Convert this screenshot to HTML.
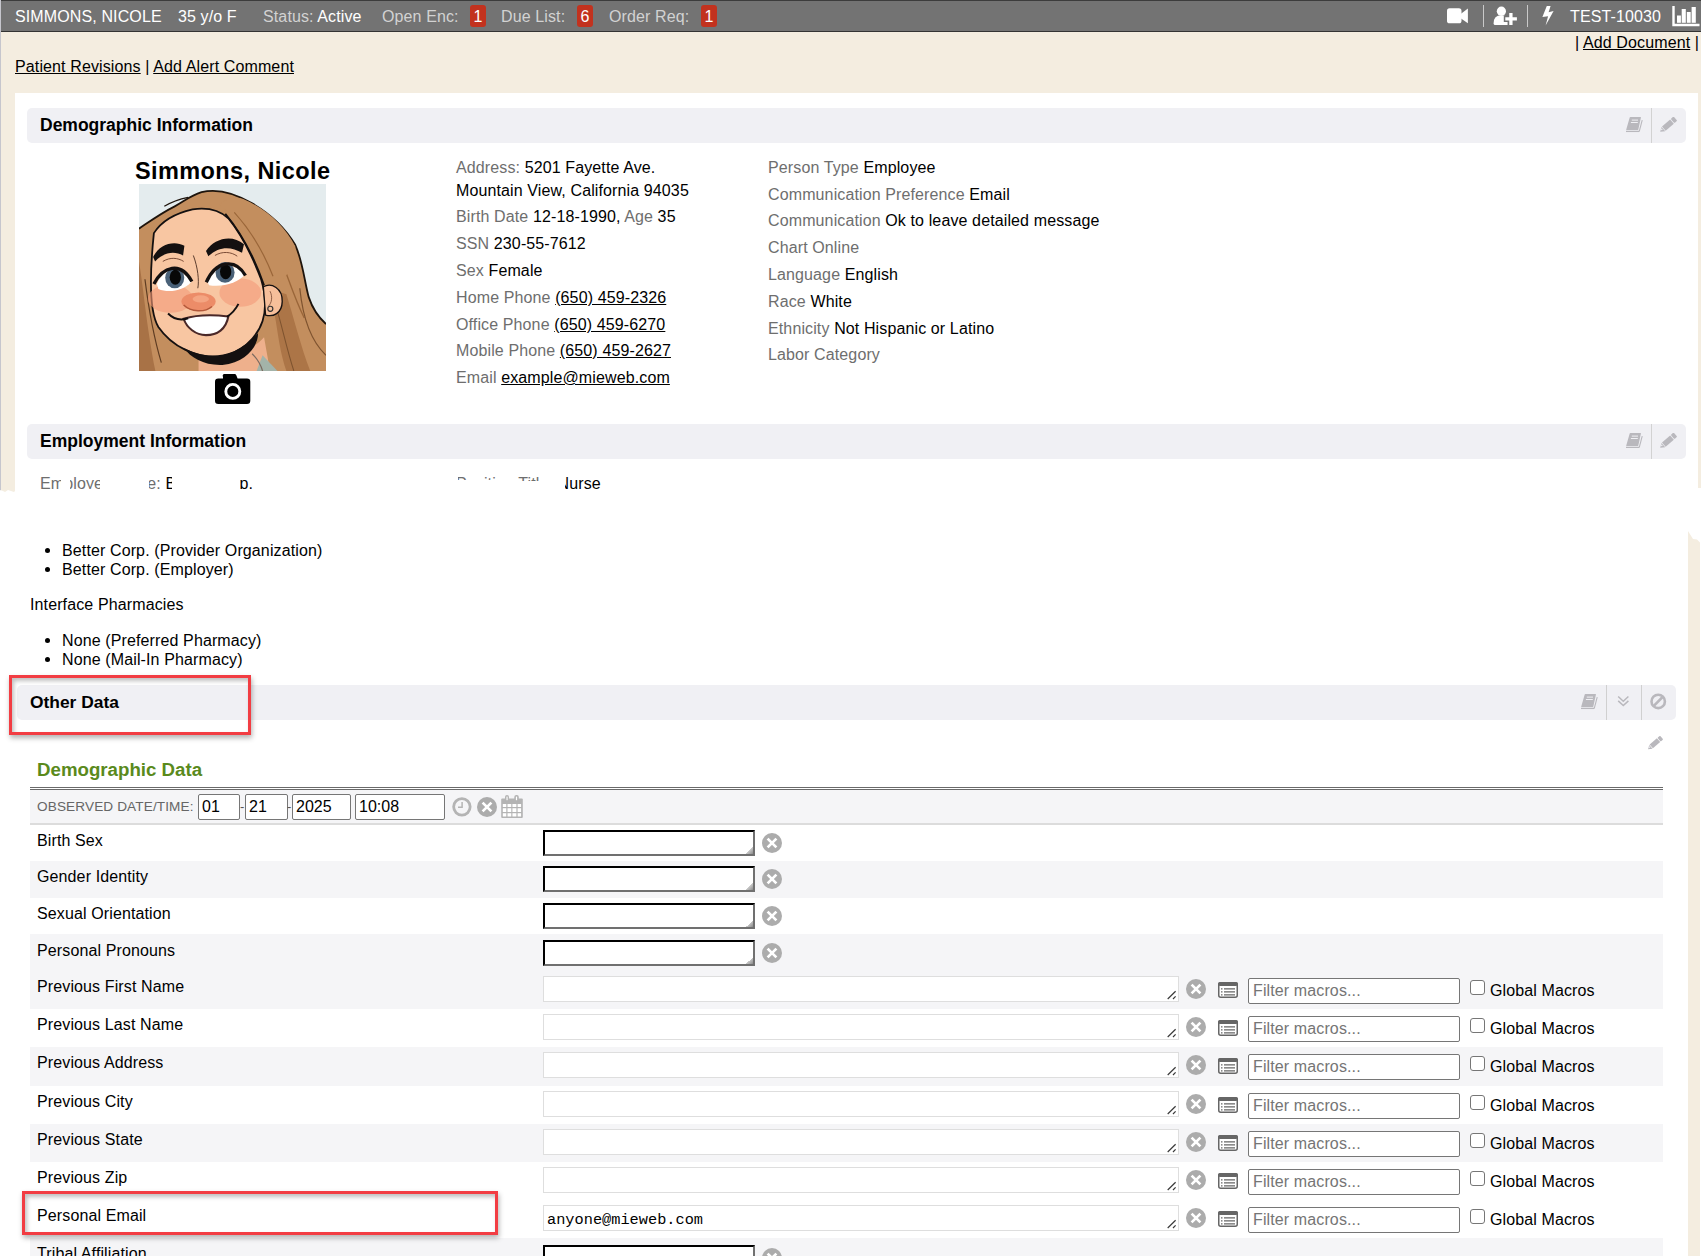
<!DOCTYPE html>
<html><head><meta charset="utf-8">
<style>
*{box-sizing:border-box}
html,body{margin:0;padding:0}
body{width:1701px;height:1256px;position:relative;overflow:hidden;background:#fff;font-family:"Liberation Sans",sans-serif;color:#000}
.a{position:absolute;white-space:pre;line-height:1}
.t16{font-size:16px;letter-spacing:.12px}
.lbl{color:#6e6e6e}
.u{text-decoration:underline;text-underline-offset:1px}
#top{position:absolute;left:0;top:0;width:1701px;height:492px;clip-path:polygon(0 0,1701px 0,1701px 488px,1698px 488px,1698px 489px,15px 489px,15px 491px,14px 492px,11px 491px,8px 490px,5px 492px,3px 491px,0 490px);background:#f4ede0;overflow:hidden}
#bar{position:absolute;left:0;top:0;width:1701px;height:32px;background:#737373;border-top:1px solid #3c3c3c;border-bottom:1px solid #333}
.w{color:#fff}
.lg{color:#d2d2d2}
.badge{position:absolute;top:5px;width:16px;height:22px;background:#c2321e;border-radius:3px;color:#fff;font-size:16px;line-height:24px;text-align:center}
.hdr{position:absolute;background:#f0f0f4;border-radius:5px}
.hdrt{font-weight:bold}
.ico{position:absolute}
#bottom{position:absolute;left:0;top:0;width:1701px;height:1256px}
.row{position:absolute;left:30px;width:1633px}
.g{background:#f5f5f7}
.sel{position:absolute;left:543px;width:212px;height:26px;background:#fff;border:2px solid;border-color:#000 #707070 #707070 #000}
.ta{position:absolute;left:543px;width:636px;height:26px;background:#fff;border:1px solid #dedede}
.flt{position:absolute;left:1248px;width:212px;height:26px;background:#fff;border:1px solid #767676;border-radius:2px;color:#757575;font-size:16px;line-height:24px;padding-left:4px;letter-spacing:.12px;white-space:pre}
.cb{position:absolute;left:1470px;width:15px;height:15px;border:1.3px solid #767676;border-radius:3px;background:#fff}
.gm{position:absolute;left:1490px;font-size:16px;line-height:1;letter-spacing:.12px;white-space:pre}
.lab{position:absolute;left:37px;font-size:16px;line-height:1;white-space:pre;letter-spacing:.12px}

.clr{position:absolute;width:20px;height:20px}
.mac{position:absolute;width:20px;height:16px}
.grip{position:absolute;right:0;bottom:0;width:7px;height:7px;background:linear-gradient(135deg,transparent 50%,#c8c8c8 50%,#8a8a8a)}
.rsz{position:absolute;right:1px;bottom:1px;width:11px;height:11px}
.mono{font-family:"Liberation Mono",monospace;font-size:15.3px;position:absolute;left:3px;top:7px;line-height:1;white-space:pre}
.bul{position:absolute;width:5px;height:5px;border-radius:50%;background:#000}
.redbox{position:absolute;border:3px solid #f23d43;box-shadow:1px 3px 5px rgba(0,0,0,.3), inset 2px 3px 4px rgba(0,0,0,.25)}
.dtin{position:absolute;top:794px;height:26px;background:#fff;border:1px solid #767676;border-radius:2px;font-size:16px;line-height:24px;padding-left:3px}
</style></head>
<body>
<svg width="0" height="0" style="position:absolute">
<symbol id="ix" viewBox="0 0 20 20"><circle cx="10" cy="10" r="10" fill="#acacac"/><path d="M5.6 5.6L14.4 14.4M14.4 5.6L5.6 14.4" stroke="#fff" stroke-width="2.7" stroke-linecap="butt"/></symbol>
<symbol id="imac" viewBox="0 0 20 16"><rect x="0.75" y="0.75" width="18.5" height="14.5" rx="2" fill="#fff" stroke="#666" stroke-width="1.5"/><rect x="0" y="0" width="20" height="4" rx="2" fill="#666"/><path d="M3 6.8h1.5M3 9.8h1.5M3 12.8h1.5M6 6.8h11M6 9.8h11M6 12.8h11" stroke="#666" stroke-width="1.3"/></symbol>
<symbol id="ibook" viewBox="0 0 24 24"><path d="M10.4 7h10.1q.6 0 .45.6L18.3 19.4q-.15.6-.7.6H6.7q-.6 0-.45-.6L9.7 7.6q.15-.6.7-.6z" fill="#b9b8bd"/><rect x="11.8" y="9.6" width="6.2" height="1" fill="#f0f0f4"/><rect x="10.9" y="12" width="6.9" height="1" fill="#f0f0f4"/><path d="M6 21.4h13" stroke="#b9b8bd" stroke-width="1.3"/><path d="M22.2 10.2L19.2 21.6" stroke="#b9b8bd" stroke-width="1.1"/></symbol>
<symbol id="ipen" viewBox="0 0 18 16"><g transform="translate(1.2 14.8) rotate(-41)"><path d="M0 0L4.2 -2.8V2.8Z" fill="#b9b8bd"/><path d="M1.2 -.9L3.3 -2V.4Z" fill="#f0f0f4" opacity=".9"/><rect x="4.8" y="-2.8" width="10.8" height="5.6" fill="#b9b8bd"/><rect x="16.4" y="-2.8" width="3.8" height="5.6" rx="1" fill="#b9b8bd"/></g></symbol>
<symbol id="irs" viewBox="0 0 11 11"><path d="M1.7 10L9.6 2.3M7 10L9.6 7.4" stroke="#3a3a3a" stroke-width="1.2"/></symbol>
</svg>
<div id="top">
  <div id="bar">
    <div class="a t16 w" style="left:15px;top:8px">SIMMONS, NICOLE</div>
    <div class="a t16 w" style="left:178px;top:8px">35 y/o F</div>
    <div class="a t16" style="left:263px;top:8px"><span class="lg">Status: </span><span class="w">Active</span></div>
    <div class="a t16 lg" style="left:382px;top:8px">Open Enc:</div>
    <div class="badge" style="left:470px;top:4px">1</div>
    <div class="a t16 lg" style="left:501px;top:8px">Due List:</div>
    <div class="badge" style="left:577px;top:4px">6</div>
    <div class="a t16 lg" style="left:609px;top:8px">Order Req:</div>
    <div class="badge" style="left:701px;top:4px">1</div>
    <div class="a t16 w" style="left:1570px;top:8px">TEST-10030</div>
    <svg class="ico" style="left:1446px;top:6px" width="24" height="17" viewBox="0 0 24 17"><rect x="1" y="1.3" width="14.5" height="15" rx="2.6" fill="#fff"/><path d="M15 6.8L21.9 1.6V16.2L15 11.4Z" fill="#fff"/></svg>
    <div style="position:absolute;left:1483px;top:4px;width:1px;height:22px;background:#c9c9c9"></div>
    <svg class="ico" style="left:1492px;top:5px" width="28" height="26" viewBox="0 0 28 26"><circle cx="9.4" cy="5.2" r="4.6" fill="#fff"/><path d="M1.6 17.4Q1.6 9.3 9.3 9.3Q13.6 9.3 15.6 12V18.9H3.1Q1.6 18.9 1.6 17.4Z" fill="#fff"/><path d="M18.9 5.5v15M11.8 12.9h14.6" stroke="#737373" stroke-width="6"/><path d="M18.9 7v11.9M13.3 12.9h11.6" stroke="#fff" stroke-width="3.3"/></svg>
    <div style="position:absolute;left:1527px;top:4px;width:1px;height:22px;background:#c9c9c9"></div>
    <svg class="ico" style="left:1540px;top:4px" width="16" height="23" viewBox="0 0 16 23"><path d="M6.8 1H10.6L8.6 7.2L13.6 6.1L5.6 20.6L8.1 11.2L2.4 11.9Z" fill="#fff"/></svg>
    <svg class="ico" style="left:1670px;top:4px" width="31" height="24" viewBox="0 0 31 24"><path d="M3.5 0.9V20H29.5" fill="none" stroke="#fff" stroke-width="2.4"/><rect x="7" y="10.5" width="3.9" height="7.3" fill="#fff"/><rect x="11.7" y="4" width="4.1" height="13.8" fill="#fff"/><rect x="16.8" y="7" width="3.9" height="10.8" fill="#fff"/><rect x="21.6" y="2" width="4.2" height="15.8" fill="#fff"/></svg>

  </div>
  <div class="a t16" style="left:15px;top:59px"><span class="u">Patient Revisions</span> | <span class="u">Add Alert Comment</span></div>
  <div class="a t16" style="left:1575px;top:35px">| <span class="u">Add Document</span> |</div>
  
  <div id="panel" style="position:absolute;left:15px;top:93px;width:1683px;height:420px;background:#fff">
  </div>
  <div class="hdr" style="left:27px;top:108px;width:1659px;height:35px"></div>
  <div class="a hdrt" style="left:40px;top:117px;font-size:17.5px">Demographic Information</div>
  <div class="hdr" style="left:27px;top:424px;width:1659px;height:35px"></div>
  <div class="a hdrt" style="left:40px;top:433px;font-size:17.5px">Employment Information</div>

  <div class="a hdrt" style="left:135px;top:160px;font-size:23.5px;letter-spacing:.4px">Simmons, Nicole</div>
  <svg id="face" style="position:absolute;left:139px;top:184px" width="187" height="187" viewBox="0 0 1256 1256">
<rect width="1256" height="1256" fill="#e4ecee"/>
<path d="M0 300 C60 260 140 200 240 150 C300 120 340 80 420 55 C520 30 640 60 760 130 C880 200 980 290 1050 410 C1100 520 1110 650 1140 760 C1170 850 1210 900 1256 940 L1256 1256 L0 1256 Z" fill="#c38e5e"/>
<path d="M0 300 C60 260 140 200 240 150 C300 120 340 80 420 55 C520 30 640 60 760 130 C880 200 980 290 1050 410 C1100 520 1110 650 1140 760 C1170 850 1210 900 1256 940" fill="none" stroke="#1e140c" stroke-width="12"/>
<path d="M170 150 C220 120 280 100 330 90" fill="none" stroke="#1e140c" stroke-width="8"/>
<path d="M0 520 C30 700 50 950 110 1256 L0 1256Z" fill="#a87246"/>
<path d="M860 700 C930 850 920 1050 990 1256 L1150 1256 C1090 1100 1040 900 990 740Z" fill="#ac7547"/>
<path d="M640 130 C760 220 880 340 950 500 C1000 620 1040 760 1110 900" fill="none" stroke="#9a6639" stroke-width="9"/>
<path d="M720 150 C830 240 930 350 990 480" fill="none" stroke="#7e532f" stroke-width="7"/>
<path d="M1080 700 C1100 900 1150 1050 1256 1150" fill="none" stroke="#7e532f" stroke-width="8"/>
<path d="M40 640 C60 800 90 1000 150 1200" fill="none" stroke="#5e3c22" stroke-width="8"/>
<path d="M920 820 C960 950 990 1100 1040 1256" fill="none" stroke="#7e532f" stroke-width="7"/>
<path d="M400 1120 C500 1190 700 1180 840 1030 L880 1256 L400 1256 Z" fill="#eeb08c"/>
<path d="M830 1150 L930 1256 L790 1256Z" fill="#a3b3a9"/>
<path d="M760 1140 C800 1180 820 1220 830 1256" fill="none" stroke="#7a6a60" stroke-width="8"/>
<path d="M100 330 C150 250 250 195 360 170 C460 155 540 175 600 230 C680 330 760 480 820 640 C850 740 855 840 830 920 C790 1040 680 1140 540 1160 C380 1170 220 1090 130 960 C70 860 70 620 100 330Z" fill="#f8c6a2" stroke="#141010" stroke-width="12"/>
<path d="M540 140 C640 220 740 370 810 560 C830 620 845 670 860 700 C960 690 1050 560 1050 420 C980 280 860 170 700 100 C640 80 580 100 540 140Z" fill="#c38e5e"/>
<path d="M580 200 C680 320 770 480 840 680" fill="none" stroke="#141010" stroke-width="12"/>
<path d="M640 190 C740 300 830 440 900 620" fill="none" stroke="#9a6639" stroke-width="8"/>
<path d="M300 1100 C440 1180 640 1185 800 1000 C800 1090 720 1200 560 1215 C440 1220 350 1170 300 1100Z" fill="#141010"/>
<path d="M835 690 C890 660 965 700 962 790 C960 870 900 895 850 880Z" fill="#f6bf9a" stroke="#141010" stroke-width="9"/>
<path d="M880 720 C900 760 890 800 870 820" fill="none" stroke="#6b3d2a" stroke-width="5"/>
<circle cx="882" cy="838" r="17" fill="none" stroke="#333" stroke-width="8"/>
<ellipse cx="210" cy="770" rx="150" ry="95" fill="#f39a78" opacity=".6"/>
<ellipse cx="680" cy="730" rx="140" ry="95" fill="#f39a78" opacity=".6"/>
<ellipse cx="400" cy="790" rx="115" ry="62" fill="#ec8c68"/>
<ellipse cx="415" cy="772" rx="55" ry="24" fill="#f4a582"/>
<path d="M300 812 C350 860 440 865 490 822" fill="none" stroke="#b2583a" stroke-width="9"/>
<path d="M365 480 C395 560 405 650 395 700" fill="none" stroke="#4a2d20" stroke-width="6"/>
<path d="M95 490 C135 405 235 375 305 415 L296 480 C240 450 170 455 108 520Z" fill="#141010"/>
<path d="M450 450 C505 365 625 335 705 405 L692 462 C620 420 540 415 466 485Z" fill="#141010"/>
<path d="M160 520 C210 490 260 495 300 520" fill="none" stroke="#6b3d2a" stroke-width="6"/>
<path d="M510 480 C560 450 620 455 660 485" fill="none" stroke="#6b3d2a" stroke-width="6"/>
<path d="M120 670 C165 565 275 540 350 660 C300 715 200 735 130 705Z" fill="#fff"/>
<ellipse cx="240" cy="630" rx="64" ry="70" fill="#4a6178"/>
<ellipse cx="244" cy="626" rx="38" ry="50" fill="#080808"/>
<path d="M100 672 C160 555 280 515 355 655" fill="none" stroke="#141010" stroke-width="22"/>
<path d="M460 655 C510 545 630 520 712 605 C670 665 560 695 470 680Z" fill="#fff"/>
<ellipse cx="578" cy="594" rx="64" ry="70" fill="#4a6178"/>
<ellipse cx="582" cy="590" rx="38" ry="50" fill="#080808"/>
<path d="M452 660 C512 520 645 490 715 615" fill="none" stroke="#141010" stroke-width="22"/>
<path d="M300 905 C400 875 520 880 600 890 C585 975 525 1015 450 1015 C380 1015 320 965 300 905Z" fill="#fff" stroke="#4a2828" stroke-width="14"/>
<path d="M195 870 C240 915 290 915 330 902" fill="none" stroke="#141010" stroke-width="13"/>
<path d="M590 892 C625 870 650 840 668 805" fill="none" stroke="#141010" stroke-width="13"/>
</svg>



  <svg class="ico" style="left:1620px;top:110px" width="24" height="24"><use href="#ibook"/></svg>
  <div style="position:absolute;left:1651px;top:108px;width:1px;height:35px;background:#d2d2d2"></div>
  <svg class="ico" style="left:1659px;top:117px" width="18" height="16"><use href="#ipen"/></svg>
  <svg class="ico" style="left:1620px;top:426px" width="24" height="24"><use href="#ibook"/></svg>
  <div style="position:absolute;left:1651px;top:424px;width:1px;height:35px;background:#d2d2d2"></div>
  <svg class="ico" style="left:1659px;top:433px" width="18" height="16"><use href="#ipen"/></svg>
  <svg class="ico" style="left:215px;top:374px" width="36" height="31" viewBox="0 0 36 31"><path d="M9.4 0h10.2q1.2 0 1.7 1.2L22.6 4.4H32q3.3 0 3.3 3.3v19.1q0 3.3-3.3 3.3H3.3Q0 30.1 0 26.8V7.7q0-3.3 3.3-3.3h4.8L7.7 1.2Q8.2 0 9.4 0z" transform="translate(0 0)" fill="#000"/><circle cx="17.8" cy="17.4" r="7" fill="none" stroke="#fff" stroke-width="2.9"/></svg>
  <!-- address column -->
  <div class="a t16" style="left:456px;top:160px"><span class="lbl">Address: </span>5201 Fayette Ave.</div>
  <div class="a t16" style="left:456px;top:183px">Mountain View, California 94035</div>
  <div class="a t16" style="left:456px;top:209px"><span class="lbl">Birth Date </span>12-18-1990, <span class="lbl">Age </span>35</div>
  <div class="a t16" style="left:456px;top:236px"><span class="lbl">SSN </span>230-55-7612</div>
  <div class="a t16" style="left:456px;top:263px"><span class="lbl">Sex </span>Female</div>
  <div class="a t16" style="left:456px;top:290px"><span class="lbl">Home Phone </span><span class="u">(650) 459-2326</span></div>
  <div class="a t16" style="left:456px;top:317px"><span class="lbl">Office Phone </span><span class="u">(650) 459-6270</span></div>
  <div class="a t16" style="left:456px;top:343px"><span class="lbl">Mobile Phone </span><span class="u">(650) 459-2627</span></div>
  <div class="a t16" style="left:456px;top:370px"><span class="lbl">Email </span><span class="u">example@mieweb.com</span></div>

  <!-- right column -->
  <div class="a t16" style="left:768px;top:160px"><span class="lbl">Person Type </span>Employee</div>
  <div class="a t16" style="left:768px;top:187px"><span class="lbl">Communication Preference </span>Email</div>
  <div class="a t16" style="left:768px;top:213px"><span class="lbl">Communication </span>Ok to leave detailed message</div>
  <div class="a t16" style="left:768px;top:240px"><span class="lbl">Chart Online</span></div>
  <div class="a t16" style="left:768px;top:267px"><span class="lbl">Language </span>English</div>
  <div class="a t16" style="left:768px;top:294px"><span class="lbl">Race </span>White</div>
  <div class="a t16" style="left:768px;top:321px"><span class="lbl">Ethnicity </span>Not Hispanic or Latino</div>
  <div class="a t16" style="left:768px;top:347px"><span class="lbl">Labor Category</span></div>

  <div class="a t16" style="left:40px;top:476px"><span class="lbl">Employer Name: </span>Better Corp.</div>
  <div class="a t16" style="left:456px;top:476px"><span class="lbl">Position Title: </span>Nurse</div>
  <div style="position:absolute;left:0;top:0;width:1px;height:492px;background:#c6c6cd"></div>
  <div style="position:absolute;left:61px;top:472px;width:9px;height:20px;background:#fff"></div>
  <div style="position:absolute;left:100px;top:472px;width:49px;height:20px;background:#fff"></div>
  <div style="position:absolute;left:172px;top:472px;width:68px;height:20px;background:#fff"></div>
  <div style="position:absolute;left:442px;top:472px;width:16px;height:20px;background:#fff"></div>
  <div style="position:absolute;left:458px;top:480px;width:60px;height:12px;background:#fff"></div>
  <div style="position:absolute;left:518px;top:481px;width:22px;height:11px;background:#fff"></div>
  <div style="position:absolute;left:540px;top:472px;width:25px;height:20px;background:#fff"></div>
</div>

<div id="bottom">
  <div style="position:absolute;left:1688px;top:531px;width:12px;height:725px;background:#f4ede0;clip-path:polygon(0 0,5px 8px,9px 8.5px,12px 11.5px,12px 725px,0 725px)"></div>
  <div class="bul" style="left:45px;top:548px"></div>
  <div class="a t16" style="left:62px;top:543px">Better Corp. (Provider Organization)</div>
  <div class="bul" style="left:45px;top:567px"></div>
  <div class="a t16" style="left:62px;top:562px">Better Corp. (Employer)</div>
  <div class="a t16" style="left:30px;top:597px">Interface Pharmacies</div>
  <div class="bul" style="left:45px;top:638px"></div>
  <div class="a t16" style="left:62px;top:633px">None (Preferred Pharmacy)</div>
  <div class="bul" style="left:45px;top:657px"></div>
  <div class="a t16" style="left:62px;top:652px">None (Mail-In Pharmacy)</div>
  <div class="hdr" style="left:17px;top:685px;width:1659px;height:35px"></div>
  <div style="position:absolute;left:1606px;top:685px;width:1px;height:35px;background:#d0d0d0"></div>
  <div style="position:absolute;left:1641px;top:685px;width:1px;height:35px;background:#d0d0d0"></div>
  <div class="a hdrt" style="left:30px;top:694px;font-size:17.4px">Other Data</div>
  <svg class="ico" style="left:1575px;top:687px" width="24" height="24"><use href="#ibook"/></svg>
  <svg class="ico" style="left:1616px;top:694px" width="14" height="14" viewBox="0 0 14 14"><path d="M2.2 2.5L7.3 7.2L12.4 2.5M2.2 6.9L7.3 11.6L12.4 6.9" fill="none" stroke="#b9b8bd" stroke-width="1.5"/></svg>
  <svg class="ico" style="left:1649px;top:693px" width="18" height="17" viewBox="0 0 18 17"><circle cx="9.2" cy="8.4" r="6.7" fill="none" stroke="#b9b8bd" stroke-width="2.6"/><path d="M13.6 4L4.8 12.8" stroke="#b9b8bd" stroke-width="2.6"/></svg>
  <svg class="ico" style="left:1647px;top:736px" width="16" height="14.5"><use href="#ipen"/></svg>

  <div class="a" style="left:37px;top:761px;font-size:18.7px;font-weight:bold;color:#5a8a1c">Demographic Data</div>
  <div style="position:absolute;left:30px;top:787px;width:1633px;height:3px;border-top:1px solid #6a6a6a;border-bottom:1px solid #6a6a6a"></div>
  <div style="position:absolute;left:30px;top:790px;width:1633px;height:35px;background:#f5f5f7;border-bottom:2px solid #dcdcdc"></div>
  <div class="a" style="left:37px;top:800px;font-size:13.6px;letter-spacing:.12px;color:#666">OBSERVED DATE/TIME:</div>
  <div class="dtin" style="left:198px;width:42px">01</div>
  <div class="a" style="left:240px;top:800px;font-size:13px;color:#555">-</div>
  <div class="dtin" style="left:245px;width:43px">21</div>
  <div class="a" style="left:287px;top:800px;font-size:13px;color:#555">-</div>
  <div class="dtin" style="left:292px;width:59px">2025</div>
  <div class="dtin" style="left:355px;width:90px">10:08</div>
  <svg class="ico" style="left:451px;top:796px" width="22" height="22" viewBox="0 0 22 22"><circle cx="10.9" cy="10.85" r="8.25" fill="none" stroke="#b4b4b4" stroke-width="2.8"/><path d="M11.1 6v5.2H7" fill="none" stroke="#b4b4b4" stroke-width="1.5"/></svg>
  <svg class="clr" style="left:477px;top:797px"><use href="#ix"/></svg>
  <svg class="ico" style="left:501px;top:795px" width="22" height="23" viewBox="0 0 22 23"><rect x="0.2" y="3.6" width="21.6" height="19.4" rx="1" fill="#b4b4b4"/><g fill="#fff"><rect x="1.8" y="9" width="3.5" height="3"/><rect x="6.5" y="9" width="3.8" height="3"/><rect x="11.4" y="9" width="4" height="3"/><rect x="16.6" y="9" width="3.5" height="3"/><rect x="1.8" y="13.2" width="3.5" height="3.8"/><rect x="6.5" y="13.2" width="3.8" height="3.8"/><rect x="11.4" y="13.2" width="4" height="3.8"/><rect x="16.6" y="13.2" width="3.5" height="3.8"/><rect x="1.8" y="18.2" width="3.5" height="3.3"/><rect x="6.5" y="18.2" width="3.8" height="3.3"/><rect x="11.4" y="18.2" width="4" height="3.3"/><rect x="16.6" y="18.2" width="3.5" height="3.3"/></g><rect x="4" y="0" width="4" height="6.5" rx="2" fill="#b4b4b4"/><rect x="13.3" y="0" width="4.5" height="6.5" rx="2" fill="#b4b4b4"/><rect x="5.5" y="1.6" width="1.1" height="3.6" fill="#fff"/><rect x="14.9" y="1.6" width="1.2" height="3.6" fill="#fff"/></svg>
<div class="row g" style="top:861px;height:37px"></div>
<div class="row g" style="top:934px;height:75px"></div>
<div class="row g" style="top:1047px;height:39px"></div>
<div class="row g" style="top:1124px;height:38px"></div>
<div class="row g" style="top:1238px;height:62px"></div>
<div class="lab" style="top:833px">Birth Sex</div>
<div class="sel" style="top:830px"><i class="grip"></i></div>
<svg class="clr" style="left:762px;top:833px"><use href="#ix"/></svg>
<div class="lab" style="top:869px">Gender Identity</div>
<div class="sel" style="top:866px"><i class="grip"></i></div>
<svg class="clr" style="left:762px;top:869px"><use href="#ix"/></svg>
<div class="lab" style="top:906px">Sexual Orientation</div>
<div class="sel" style="top:903px"><i class="grip"></i></div>
<svg class="clr" style="left:762px;top:906px"><use href="#ix"/></svg>
<div class="lab" style="top:943px">Personal Pronouns</div>
<div class="sel" style="top:940px"><i class="grip"></i></div>
<svg class="clr" style="left:762px;top:943px"><use href="#ix"/></svg>
<div class="lab" style="top:979px">Previous First Name</div>
<div class="ta" style="top:976px"><svg class="rsz"><use href="#irs"/></svg></div>
<svg class="clr" style="left:1186px;top:979px"><use href="#ix"/></svg>
<svg class="mac" style="left:1218px;top:982px"><use href="#imac"/></svg>
<div class="flt" style="top:978px">Filter macros...</div>
<div class="cb" style="top:980px"></div>
<div class="gm" style="top:983px">Global Macros</div>
<div class="lab" style="top:1017px">Previous Last Name</div>
<div class="ta" style="top:1014px"><svg class="rsz"><use href="#irs"/></svg></div>
<svg class="clr" style="left:1186px;top:1017px"><use href="#ix"/></svg>
<svg class="mac" style="left:1218px;top:1020px"><use href="#imac"/></svg>
<div class="flt" style="top:1016px">Filter macros...</div>
<div class="cb" style="top:1018px"></div>
<div class="gm" style="top:1021px">Global Macros</div>
<div class="lab" style="top:1055px">Previous Address</div>
<div class="ta" style="top:1052px"><svg class="rsz"><use href="#irs"/></svg></div>
<svg class="clr" style="left:1186px;top:1055px"><use href="#ix"/></svg>
<svg class="mac" style="left:1218px;top:1058px"><use href="#imac"/></svg>
<div class="flt" style="top:1054px">Filter macros...</div>
<div class="cb" style="top:1056px"></div>
<div class="gm" style="top:1059px">Global Macros</div>
<div class="lab" style="top:1094px">Previous City</div>
<div class="ta" style="top:1091px"><svg class="rsz"><use href="#irs"/></svg></div>
<svg class="clr" style="left:1186px;top:1094px"><use href="#ix"/></svg>
<svg class="mac" style="left:1218px;top:1097px"><use href="#imac"/></svg>
<div class="flt" style="top:1093px">Filter macros...</div>
<div class="cb" style="top:1095px"></div>
<div class="gm" style="top:1098px">Global Macros</div>
<div class="lab" style="top:1132px">Previous State</div>
<div class="ta" style="top:1129px"><svg class="rsz"><use href="#irs"/></svg></div>
<svg class="clr" style="left:1186px;top:1132px"><use href="#ix"/></svg>
<svg class="mac" style="left:1218px;top:1135px"><use href="#imac"/></svg>
<div class="flt" style="top:1131px">Filter macros...</div>
<div class="cb" style="top:1133px"></div>
<div class="gm" style="top:1136px">Global Macros</div>
<div class="lab" style="top:1170px">Previous Zip</div>
<div class="ta" style="top:1167px"><svg class="rsz"><use href="#irs"/></svg></div>
<svg class="clr" style="left:1186px;top:1170px"><use href="#ix"/></svg>
<svg class="mac" style="left:1218px;top:1173px"><use href="#imac"/></svg>
<div class="flt" style="top:1169px">Filter macros...</div>
<div class="cb" style="top:1171px"></div>
<div class="gm" style="top:1174px">Global Macros</div>
<div class="lab" style="top:1208px">Personal Email</div>
<div class="ta" style="top:1205px"><span class="mono">anyone@mieweb.com</span><svg class="rsz"><use href="#irs"/></svg></div>
<svg class="clr" style="left:1186px;top:1208px"><use href="#ix"/></svg>
<svg class="mac" style="left:1218px;top:1211px"><use href="#imac"/></svg>
<div class="flt" style="top:1207px">Filter macros...</div>
<div class="cb" style="top:1209px"></div>
<div class="gm" style="top:1212px">Global Macros</div>
<div class="lab" style="top:1246px">Tribal Affiliation</div>
<div class="sel" style="top:1245px"><i class="grip"></i></div>
<svg class="clr" style="left:762px;top:1248px"><use href="#ix"/></svg>
  <div class="redbox" style="left:9px;top:675px;width:242px;height:60px"></div>
  <div class="redbox" style="left:22px;top:1191px;width:476px;height:44px"></div>
</div>
</body></html>
